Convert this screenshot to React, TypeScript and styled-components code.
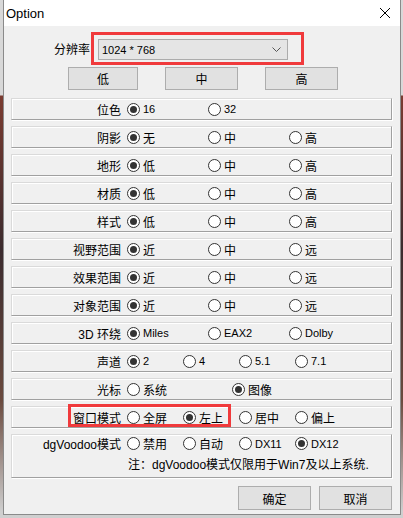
import styled, { createGlobalStyle } from "styled-components";

const GlobalStyle = createGlobalStyle`
  html, body {
    margin: 0;
    padding: 0;
  }

  body {
    width: 403px;
    height: 518px;
    overflow: hidden;
    background: linear-gradient(
      180deg,
      #d8d8d8 0,
      #d8d8d8 95px,
      #7a3b30 96px,
      #3b2b2e 250px,
      #6a4a3e 400px,
      #cfcfcf 512px
    );
    font-family: "Liberation Sans", "Noto Sans CJK SC", sans-serif;
    color: #000;
  }
`;

interface RowData {
  label: string;
  options: string[];
  checked: number;
  step: number;
  latin?: boolean;
  marked?: boolean;
}

const rows: RowData[] = [
  { label: "位色", options: ["16", "32"], checked: 0, step: 81, latin: true },
  { label: "阴影", options: ["无", "中", "高"], checked: 0, step: 81 },
  { label: "地形", options: ["低", "中", "高"], checked: 0, step: 81 },
  { label: "材质", options: ["低", "中", "高"], checked: 0, step: 81 },
  { label: "样式", options: ["低", "中", "高"], checked: 0, step: 81 },
  { label: "视野范围", options: ["近", "中", "远"], checked: 0, step: 81 },
  { label: "效果范围", options: ["近", "中", "远"], checked: 0, step: 81 },
  { label: "对象范围", options: ["近", "中", "远"], checked: 0, step: 81 },
  { label: "3D 环绕", options: ["Miles", "EAX2", "Dolby"], checked: 0, step: 81, latin: true },
  { label: "声道", options: ["2", "4", "5.1", "7.1"], checked: 0, step: 56, latin: true },
  { label: "光标", options: ["系统", "图像"], checked: 1, step: 105 },
  { label: "窗口模式", options: ["全屏", "左上", "居中", "偏上"], checked: 1, step: 56, marked: true },
];

function Radio(props: { text: string; on: boolean; step: number; latin?: boolean }) {
  const { text, on, step, latin } = props;
  return (
    <Option $step={step}>
      <RadioCircle $on={on} />
      <OptionText $latin={latin || /^[A-Za-z0-9.]+$/.test(text)}>{text}</OptionText>
    </Option>
  );
}

export default function App() {
  return (
    <>
      <GlobalStyle />
      <Window>
        <TitleBar>
          <Title>Option</Title>
          <CloseButton>
            <svg width="12" height="12" viewBox="0 0 12 12">
              <path d="M1 1 L11 11 M11 1 L1 11" stroke="#000" strokeWidth="1" fill="none" />
            </svg>
          </CloseButton>
        </TitleBar>

        <Client>
          <ResolutionRow>
            <FieldLabel>分辨率</FieldLabel>
            <RedFrame>
              <ComboBox>
                <ComboText>1024 * 768</ComboText>
                <svg width="9" height="5" viewBox="0 0 9 5">
                  <path d="M0.5 0.5 L4.5 4.5 L8.5 0.5" stroke="#555" strokeWidth="1" fill="none" />
                </svg>
              </ComboBox>
            </RedFrame>
          </ResolutionRow>

          <PresetRow>
            <PresetButton $w={70}>低</PresetButton>
            <PresetButton $w={73}>中</PresetButton>
            <PresetButton $w={73}>高</PresetButton>
          </PresetRow>

          <GroupList>
            {rows.map((row) => (
              <Group key={row.label}>
                <GroupLabel>{row.label}</GroupLabel>
                <Options>
                  {row.options.map((opt, i) => (
                    <Radio key={opt} text={opt} on={i === row.checked} step={row.step} latin={row.latin} />
                  ))}
                </Options>
                {row.marked && <Marker />}
              </Group>
            ))}

            <TallGroup>
              <GroupLine>
                <GroupLabel>dgVoodoo模式</GroupLabel>
                <Options>
                  {["禁用", "自动", "DX11", "DX12"].map((opt, i) => (
                    <Radio key={opt} text={opt} on={i === 3} step={56} />
                  ))}
                </Options>
              </GroupLine>
              <NoteLine>注：dgVoodoo模式仅限用于Win7及以上系统.</NoteLine>
            </TallGroup>
          </GroupList>

          <Footer>
            <DialogButton>确定</DialogButton>
            <DialogButton>取消</DialogButton>
          </Footer>
        </Client>
      </Window>
    </>
  );
}

const Window = styled.div`
  box-sizing: border-box;
  margin-left: 3px;
  width: 398px;
  height: 515px;
  background: #f0f0f0;
  border: 1px solid #8a8a8a;
  border-top: none;
  display: flex;
  flex-direction: column;
`;

const TitleBar = styled.div`
  height: 26px;
  background: #fff;
  display: flex;
  align-items: center;
  justify-content: space-between;
  padding: 0 9px 0 2px;
`;

const Title = styled.span`
  font-size: 13px;
`;

const CloseButton = styled.span`
  display: flex;
  align-items: center;
`;

const Client = styled.div`
  flex: 1;
  display: flex;
  flex-direction: column;
`;

const ResolutionRow = styled.div`
  margin-top: 6px;
  padding-left: 50px;
  display: flex;
  align-items: center;
`;

const FieldLabel = styled.span`
  font-size: 12px;
  width: 37px;
`;

const RedFrame = styled.div`
  box-sizing: border-box;
  width: 213px;
  height: 33px;
  border: 3px solid #f03a3c;
  padding: 4px 0 0 4px;
`;

const ComboBox = styled.div`
  box-sizing: border-box;
  width: 190px;
  height: 21px;
  background: #e5e5e5;
  border: 1px solid #acacac;
  display: flex;
  align-items: center;
  justify-content: space-between;
  padding: 0 6px 0 3px;
`;

const ComboText = styled.span`
  font-size: 11px;
`;

const PresetRow = styled.div`
  margin-top: 2px;
  padding-left: 64px;
  display: flex;
  gap: 27px;
`;

const PresetButton = styled.div<{ $w: number }>`
  box-sizing: border-box;
  width: ${(p) => p.$w}px;
  height: 23px;
  background: #e1e1e1;
  border: 1px solid #adadad;
  display: flex;
  align-items: center;
  justify-content: center;
  font-size: 12px;
`;

const GroupList = styled.div`
  margin: 8px 0 0 7px;
  width: 381px;
  display: flex;
  flex-direction: column;
  gap: 6px;
`;

const Group = styled.div`
  position: relative;
  box-sizing: border-box;
  height: 22px;
  border: 1px solid #a0a0a0;
  border-top-color: #dadada;
  border-left-color: #dadada;
  box-shadow: inset 1px 1px 0 #fff, 1px 1px 0 #fff;
  display: flex;
  align-items: center;
`;

const TallGroup = styled(Group)`
  height: 44px;
  flex-direction: column;
  align-items: stretch;
  justify-content: flex-start;
`;

const GroupLine = styled.div`
  height: 17px;
  display: flex;
  align-items: center;
`;

const GroupLabel = styled.span`
  width: 109px;
  margin-right: 6px;
  text-align: right;
  font-size: 12px;
  white-space: nowrap;
`;

const Options = styled.div`
  display: flex;
  align-items: center;
`;

const Option = styled.div<{ $step: number }>`
  width: ${(p) => p.$step}px;
  display: flex;
  align-items: center;
  gap: 3px;
`;

const RadioCircle = styled.span<{ $on: boolean }>`
  box-sizing: border-box;
  width: 13px;
  height: 13px;
  border-radius: 50%;
  border: 1px solid #333;
  background: #fff;
  display: flex;
  align-items: center;
  justify-content: center;
  flex-shrink: 0;

  &::after {
    content: "";
    width: 7px;
    height: 7px;
    border-radius: 50%;
    background: #333;
    display: ${(p) => (p.$on ? "block" : "none")};
  }
`;

const OptionText = styled.span<{ $latin?: boolean }>`
  font-size: ${(p) => (p.$latin ? "11px" : "12px")};
  white-space: nowrap;
`;

const NoteLine = styled.div`
  margin-top: 3px;
  padding-left: 116px;
  font-size: 12px;
  white-space: nowrap;
`;

const Marker = styled.div`
  position: absolute;
  left: 56px;
  top: -3px;
  width: 163px;
  height: 23px;
  box-sizing: border-box;
  border: 3px solid #f03a3c;
  pointer-events: none;
`;

const Footer = styled.div`
  margin-top: 8px;
  padding-right: 8px;
  display: flex;
  justify-content: flex-end;
  gap: 8px;
`;

const DialogButton = styled.div`
  box-sizing: border-box;
  width: 73px;
  height: 24px;
  background: #e1e1e1;
  border: 1px solid #adadad;
  display: flex;
  align-items: center;
  justify-content: center;
  font-size: 12px;
`;
